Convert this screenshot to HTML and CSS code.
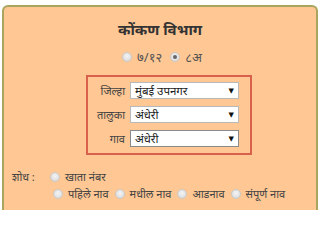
FILE: index.html
```html
<!DOCTYPE html>
<html lang="mr">
<head>
<meta charset="utf-8">
<link rel="stylesheet" href="styles.css">
</head>
<body>
<div class="panel">
  <h1 class="title">कोंकण विभाग</h1>
  <div class="type-row">
    <label class="opt"><span class="radio"></span>७/१२</label>
    <label class="opt"><span class="radio on"></span>८अ</label>
  </div>
  <div class="box">
    <div class="field"><span class="lbl">जिल्हा</span><div class="sel">मुंबई उपनगर<span class="arrow">▼</span></div></div>
    <div class="field"><span class="lbl">तालुका</span><div class="sel">अंधेरी<span class="arrow">▼</span></div></div>
    <div class="field"><span class="lbl">गाव</span><div class="sel focus">अंधेरी<span class="arrow">▼</span></div></div>
  </div>
  <div class="search">
    <div class="srow"><span class="slbl">शोध :</span><label class="opt"><span class="radio"></span>खाता नंबर</label></div>
    <div class="srow indent">
      <label class="opt"><span class="radio"></span>पहिले नाव</label>
      <label class="opt"><span class="radio"></span>मधील नाव</label>
      <label class="opt"><span class="radio"></span>आडनाव</label>
      <label class="opt"><span class="radio"></span>संपूर्ण नाव</label>
    </div>
  </div>
</div>
</body>
</html>
```
FILE: styles.css
```css
html, body { margin: 0; padding: 0; background: #fff; height: 210px; overflow: hidden; }
body {
  font-family: "Noto Sans", "DejaVu Sans", sans-serif;
  color: #333;
}
.panel {
  margin: 5px 2px 0 2px;
  height: 205px;
  background: #ffc793;
  border: 2px solid #aaa55e;
  border-bottom: 0;
  border-radius: 6px 6px 0 0;
  box-sizing: border-box;
  overflow: hidden;
}
.title {
  margin: 0;
  padding-top: 12px;
  text-align: center;
  font-size: 15px;
  font-weight: bold;
  line-height: 20px;
  color: #333;
}
.type-row {
  display: flex;
  justify-content: center;
  gap: 8px;
  margin-top: 10px;
  font-size: 13px;
  line-height: 16px;
  color: #555;
  padding-left: 4px;
}
.opt { display: inline-flex; align-items: center; gap: 5px; }
.radio {
  width: 10px; height: 10px;
  border-radius: 50%;
  background: radial-gradient(circle at 50% 40%, #f4f4f4, #d6d6d6);
  border: 1px solid #c9c9c9;
  box-sizing: border-box;
  position: relative;
  display: inline-block;
  flex: none;
}
.radio.on::after {
  content: "";
  position: absolute;
  left: 2px; top: 2px;
  width: 4px; height: 4px;
  border-radius: 50%;
  background: #666;
}
.box {
  margin: 10px 0 0 82px;
  width: 166px;
  box-sizing: border-box;
  border: 2px solid #d9604a;
  padding: 5px 11px 6px 4px;
  display: flex;
  flex-direction: column;
  gap: 7px;
}
.field {
  display: flex;
  align-items: center;
  gap: 5px;
  font-size: 11px;
}
.lbl { width: 33px; text-align: right; color: #444; white-space: nowrap; }
.sel {
  flex: 1;
  height: 15px;
  background: #fff;
  border: 1px solid #b9b9b9;
  box-sizing: content-box;
  display: flex;
  align-items: center;
  justify-content: space-between;
  padding: 0 4px;
  font-size: 11.5px;
  line-height: 15px;
  color: #222;
}
.sel.focus { border-color: #8a8a8a; }
.arrow { font-size: 7px; color: #111; }
.search {
  margin-top: 13px;
  padding-left: 8px;
  font-size: 11px;
  color: #444;
}
.srow { display: flex; align-items: center; gap: 6px; line-height: 17px; }
.slbl { width: 32px; }
.indent { padding-left: 41px; gap: 6px; }
```
